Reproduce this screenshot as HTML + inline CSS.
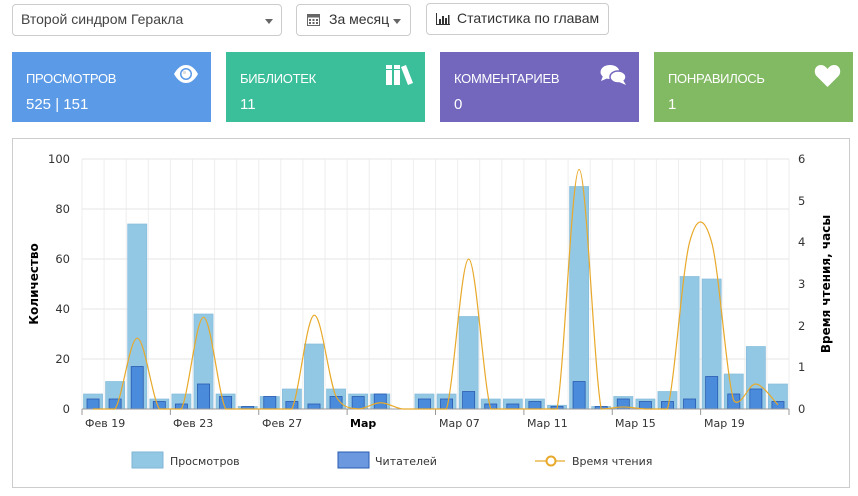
<!DOCTYPE html>
<html><head><meta charset="utf-8"><style>
body{margin:0;width:858px;height:496px;background:#fff;font-family:"Liberation Sans","DejaVu Sans",sans-serif;position:relative;overflow:hidden;color:#333}
.box{position:absolute;border:1px solid #ccc;border-radius:4px;background:#fff;box-sizing:border-box;font-size:14px;line-height:29px}
.card{position:absolute;top:52px;height:70px;color:#fff;box-sizing:border-box;padding-left:14px}
.card .t{position:absolute;top:19px;left:14px;font-size:13px;letter-spacing:-0.3px}
.card .v{position:absolute;top:44px;left:14px;font-size:15px}
.card svg{position:absolute;top:12px;right:12px}
.caret{position:absolute;width:0;height:0;border-left:4px solid transparent;border-right:4px solid transparent;border-top:5px solid #666}
</style></head><body>
<div class="box" style="left:12px;top:4px;width:270px;height:32px;padding-left:8px;color:#444">Второй синдром Геракла<span class="caret" style="left:252px;top:14px"></span></div>
<div class="box" style="left:296px;top:4px;width:115px;height:32px;padding-left:32px">За месяц<span class="caret" style="left:96px;top:14px"></span>
<svg style="position:absolute;left:10px;top:8px" width="13" height="13" viewBox="0 0 13 13"><rect x="0.5" y="1.5" width="12" height="11" fill="none" stroke="#666"/><rect x="0.5" y="1.5" width="12" height="3" fill="#666"/><g fill="#666"><rect x="2" y="6" width="2" height="2"/><rect x="5.5" y="6" width="2" height="2"/><rect x="9" y="6" width="2" height="2"/><rect x="2" y="9" width="2" height="2"/><rect x="5.5" y="9" width="2" height="2"/><rect x="9" y="9" width="2" height="2"/></g></svg></div>
<div class="box" style="left:426px;top:3px;width:183px;height:32px;padding-left:30px">Статистика по главам
<svg style="position:absolute;left:9px;top:9px" width="14" height="12" viewBox="0 0 14 12"><path d="M0.5 0V11.5H14" stroke="#333" fill="none"/><g fill="#333"><rect x="3" y="6" width="2" height="5"/><rect x="6" y="3" width="2" height="8"/><rect x="9" y="5" width="2" height="6"/><rect x="12" y="2" width="1.5" height="9"/></g></svg></div>

<div class="card" style="left:12px;width:199px;background:#5b9ae6"><div class="t">ПРОСМОТРОВ</div><div class="v">525 | 151</div>
<svg width="26" height="20" viewBox="0 0 26 20"><path d="M1 10C5 3 9 1 13 1S21 3 25 10C21 17 17 19 13 19S5 17 1 10Z" fill="#fff"/><circle cx="13" cy="10" r="6" fill="#5b9ae6"/><circle cx="13" cy="10" r="4.5" fill="#fff"/><circle cx="11.5" cy="8.5" r="1.6" fill="#ddd"/></svg></div>
<div class="card" style="left:226px;width:199px;background:#3bbe9a"><div class="t">БИБЛИОТЕК</div><div class="v">11</div>
<svg width="28" height="22" viewBox="0 0 28 22"><rect x="1" y="1" width="6" height="20" fill="#fff"/><rect x="9" y="1" width="6" height="20" fill="#fff"/><path d="M16 3L21 1L28 19L23 21Z" fill="#fff"/><rect x="1" y="5" width="14" height="1" fill="#3bbe9a"/></svg></div>
<div class="card" style="left:440px;width:199px;background:#7266bd"><div class="t">КОММЕНТАРИЕВ</div><div class="v">0</div>
<svg width="27" height="22" viewBox="0 0 27 22"><ellipse cx="10" cy="8" rx="9.5" ry="7" fill="#fff"/><path d="M3 12L1 17L8 14Z" fill="#fff"/><ellipse cx="18" cy="13" rx="8" ry="6" fill="#fff" stroke="#7266bd" stroke-width="1.5"/><path d="M23 16L26 21L19 18Z" fill="#fff"/></svg></div>
<div class="card" style="left:654px;width:199px;background:#82b963"><div class="t">ПОНРАВИЛОСЬ</div><div class="v">1</div>
<svg width="27" height="24" viewBox="0 0 27 24"><path d="M13.5 23L2.5 12C-1 8 1 1 7 1C10 1 12 3 13.5 5C15 3 17 1 20 1C26 1 28 8 24.5 12Z" fill="#fff"/></svg></div>

<div style="position:absolute;left:12px;top:138px;width:838px;height:350px;border:1px solid #ccc;box-sizing:border-box"></div>
<svg id="g" style="position:absolute;left:0;top:0" width="858" height="496" font-family="DejaVu Sans, Liberation Sans, sans-serif">
<g font-size="11.5" fill="#333" text-anchor="end">
<text x="70" y="163">100</text><text x="70" y="213">80</text><text x="70" y="263">60</text><text x="70" y="313">40</text><text x="70" y="363">20</text><text x="70" y="413">0</text>
</g>
<g font-size="11.5" fill="#333">
<text x="798" y="163">6</text><text x="798" y="205">5</text><text x="798" y="246">4</text><text x="798" y="288">3</text><text x="798" y="330">2</text><text x="798" y="371">1</text><text x="798" y="413">0</text>
</g>
<text transform="translate(38,284) rotate(-90)" font-size="12" font-weight="bold" text-anchor="middle" fill="#000">Количество</text>
<text transform="translate(830,284) rotate(-90)" font-size="12" font-weight="bold" text-anchor="middle" fill="#000">Время чтения, часы</text>
<g font-size="11" fill="#333">
<text x="85" y="427">Фев 19</text><text x="173" y="427">Фев 23</text><text x="262" y="427">Фев 27</text><text x="350" y="427" font-weight="bold" fill="#000">Мар</text><text x="439" y="427">Мар 07</text><text x="527" y="427">Мар 11</text><text x="615" y="427">Мар 15</text><text x="704" y="427">Мар 19</text>
</g>
<rect x="132" y="452" width="31" height="16" fill="#93c8e4" stroke="#7fb6d6"/><text x="170" y="465" font-size="11" fill="#333">Просмотров</text>
<rect x="338" y="452" width="31" height="16" fill="#6c98e0" stroke="#2a5bb0"/><text x="375" y="465" font-size="11" fill="#333">Читателей</text>
<line x1="535" y1="461" x2="565" y2="461" stroke="#e8a92a" stroke-width="1.2"/><circle cx="551" cy="461" r="4.5" fill="#fff" stroke="#e8a92a" stroke-width="2"/><text x="572" y="465" font-size="11" fill="#333">Время чтения</text>
<g id="plot"></g>
</svg>
<script>
var V=[6,11,74,4,6,38,6,1,5,8,26,8,6,6,0,6,6,37,4,4,4,1.5,89,1,5,4,7,53,52,14,25,10];
var R=[4,4,17,3,2,10,5,1,5,3,2,5,5,6,0,4,4,7,2,2,3,1,11,1,4,3,3,4,13,6,8,3];
var T=[0,0,1.7,0,0,2.2,0,0,0,0,2.25,0.3,0,0.15,0,0,0,3.6,0,0,0,0,5.75,0,0.05,0,0,4.0,4.0,0.2,0.6,0.1];
var L=82,Rt=789,Y0=409,Y1=159,N=32,w=(Rt-L)/N,s='';
for(var i=0;i<=N;i++){var x=(L+i*w).toFixed(1);s+='<line x1="'+x+'" y1="'+Y1+'" x2="'+x+'" y2="'+Y0+'" stroke="#eee"/>';}
for(var k=0;k<=5;k++){var y=Y0-k*50;s+='<line x1="'+L+'" y1="'+y+'" x2="'+Rt+'" y2="'+y+'" stroke="#e6e6e6"/>';}
for(var i=0;i<N;i++){var x=L+i*w,h=V[i]*2.5,r=R[i]*2.5;
if(h>0)s+='<rect x="'+(x+1.5)+'" y="'+(Y0-h)+'" width="'+(w-3)+'" height="'+h+'" fill="#93c8e4" stroke="#85bcdb" stroke-width="0.7"/>';
if(r>0)s+='<rect x="'+(x+5)+'" y="'+(Y0-r)+'" width="'+(w-10)+'" height="'+r+'" fill="#4a8bdc" stroke="#2a5bb0" stroke-width="0.8"/>';}
s+='<line x1="'+L+'" y1="'+Y0+'" x2="'+Rt+'" y2="'+Y0+'" stroke="#999"/>';
[0,4,8,12,16,20,24,28,32].forEach(function(i){var x=L+i*w;s+='<line x1="'+x+'" y1="'+Y0+'" x2="'+x+'" y2="'+(Y0+6)+'" stroke="#999"/>';});
var P=T.map(function(t,i){return [L+(i+0.5)*w,Y0-t*250/6];});
function c(y){return Math.min(y,Y0);}
var d='M'+P[0][0]+' '+P[0][1];
for(var i=0;i<N-1;i++){var p0=P[Math.max(i-1,0)],p1=P[i],p2=P[i+1],p3=P[Math.min(i+2,N-1)];
d+=' C'+(p1[0]+(p2[0]-p0[0])/6)+' '+c(p1[1]+(p2[1]-p0[1])/6)+' '+(p2[0]-(p3[0]-p1[0])/6)+' '+c(p2[1]-(p3[1]-p1[1])/6)+' '+p2[0]+' '+p2[1];}
s+='<path d="'+d+'" fill="none" stroke="#e8a92a" stroke-width="1.2"/>';
document.getElementById('plot').innerHTML=s;
</script>
</body></html>
